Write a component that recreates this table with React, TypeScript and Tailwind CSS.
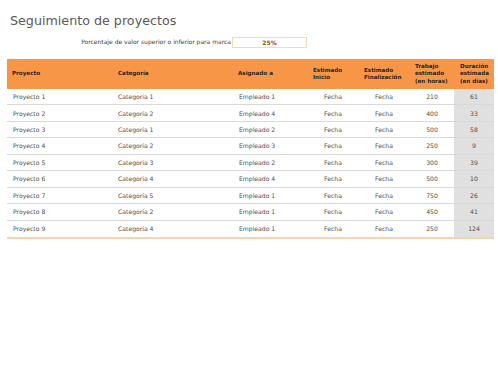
const rows = [
  { proyecto: "Proyecto 1", categoria: "Categoría 1", asignado: "Empleado 1", horas: 210, dias: 61 },
  { proyecto: "Proyecto 2", categoria: "Categoría 2", asignado: "Empleado 4", horas: 400, dias: 33 },
  { proyecto: "Proyecto 3", categoria: "Categoría 1", asignado: "Empleado 2", horas: 500, dias: 58 },
  { proyecto: "Proyecto 4", categoria: "Categoría 2", asignado: "Empleado 3", horas: 250, dias: 9 },
  { proyecto: "Proyecto 5", categoria: "Categoría 3", asignado: "Empleado 2", horas: 300, dias: 39 },
  { proyecto: "Proyecto 6", categoria: "Categoría 4", asignado: "Empleado 4", horas: 500, dias: 10 },
  { proyecto: "Proyecto 7", categoria: "Categoría 5", asignado: "Empleado 1", horas: 750, dias: 26 },
  { proyecto: "Proyecto 8", categoria: "Categoría 2", asignado: "Empleado 1", horas: 450, dias: 41 },
  { proyecto: "Proyecto 9", categoria: "Categoría 4", asignado: "Empleado 1", horas: 250, dias: 124 },
];

const cols = "grid grid-cols-[106px_120px_75px_50px_52px_44px_40px]";

export default function App() {
  return (
    <div className="w-[498px] h-[382px] bg-white text-[#4d4d4d] font-['DejaVu_Sans',sans-serif]">
      {/* Title */}
      <h1 className="pl-[10px] pt-[12px] h-[36px] text-[12.7px] font-normal text-[#595959] leading-[18px]">
        Seguimiento de proyectos
      </h1>

      {/* Threshold */}
      <div className="flex items-center h-[12px]">
        <div className="w-[232px] text-right pr-[1px] text-[6px] text-[#404040] leading-none">
          Porcentaje de valor superior o inferior para marca
        </div>
        <div className="w-[75px] h-[11px] border border-[#fcd5b4] flex items-center justify-center text-[6px] font-bold text-[#984807]">
          25%
        </div>
      </div>

      {/* Table */}
      <div className="ml-[7px] mt-[11px] w-[487px]">
        <div className={`${cols} h-[30px] bg-[#f79646] text-[5.6px] font-bold text-[#262626] leading-[7.5px] items-center`}>
          <div className="pl-[5px]">Proyecto</div>
          <div className="pl-[5px]">Categoría</div>
          <div className="pl-[5px]">Asignado a</div>
          <div className="pl-[5px]">Estimado<br />Inicio</div>
          <div className="pl-[6px]">Estimado<br />Finalización</div>
          <div className="pl-[5px]">Trabajo<br />estimado<br />(en horas)</div>
          <div className="pl-[6px]">Duración<br />estimada<br />(en días)</div>
        </div>
        <div className="border-b-2 border-[#fbd1a9]">
          {rows.map((r, i) => (
            <div
              key={r.proyecto}
              className={`${cols} h-[16.44px] items-center text-[6.1px] ${i < rows.length - 1 ? "border-b border-[#d9d9d9]" : ""}`}
            >
              <div className="pl-[6px]">{r.proyecto}</div>
              <div className="pl-[5px]">{r.categoria}</div>
              <div className="pl-[6px]">{r.asignado}</div>
              <div className="text-center">Fecha</div>
              <div className="text-center">Fecha</div>
              <div className="text-center">{r.horas}</div>
              <div className="text-center bg-[#e0e0e0] h-full flex items-center justify-center">{r.dias}</div>
            </div>
          ))}
        </div>
      </div>
    </div>
  );
}
